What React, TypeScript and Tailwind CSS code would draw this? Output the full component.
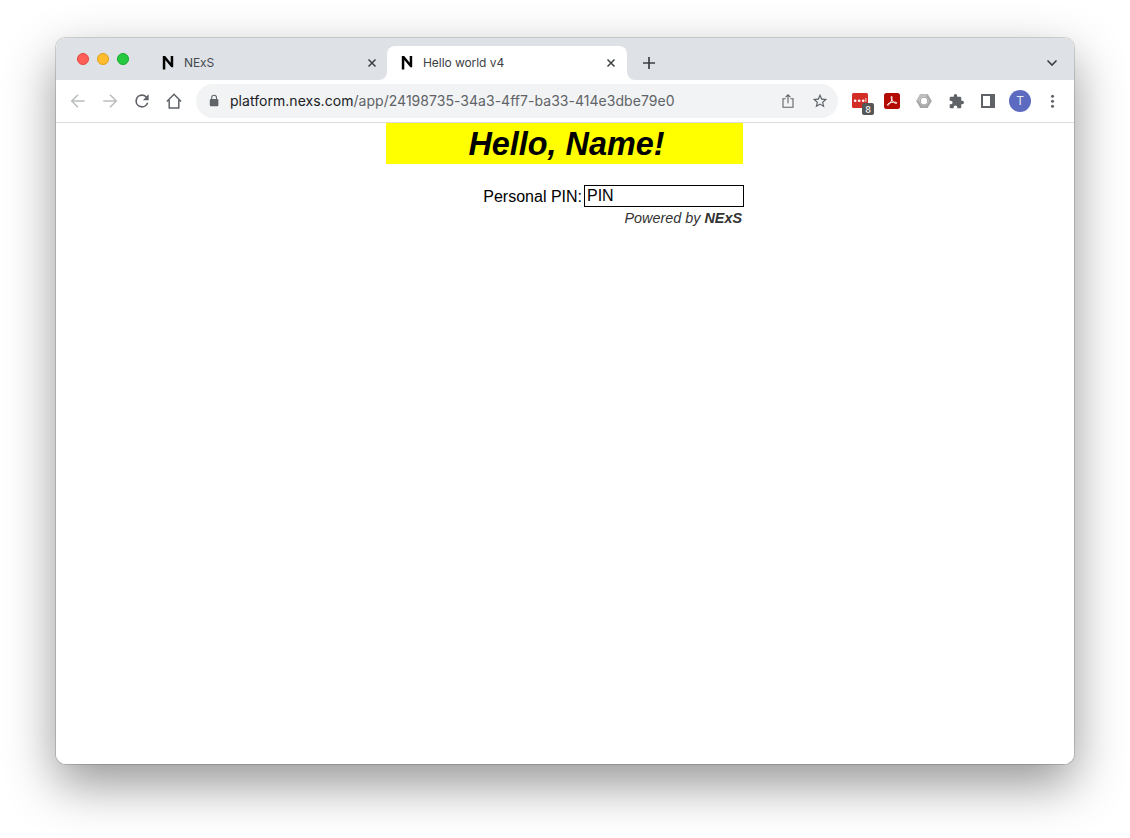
import type { ReactNode } from "react";

function NexsLogo() {
    return (
        <svg className="w-4 h-4 shrink-0" viewBox="0 0 16 16" fill="#000">
            <path d="M2.8 1h2.4l5.500 6.800V1h2.500v11.200h-1.900L5.300 5v9.600H2.800z" />
        </svg>
    );
}

function CloseIcon() {
    return (
        <svg className="w-4 h-4 shrink-0" viewBox="0 0 16 16" fill="none" stroke="#3c4043" strokeWidth={1.5}>
            <path d="M4.500 4.500l7 7M11.500 4.500l-7 7" />
        </svg>
    );
}

function Slot({ children }: { children: ReactNode }) {
    return <div className="relative w-8 h-8 shrink-0 flex items-center justify-center">{children}</div>;
}

function TabStrip() {
    return (
        <div className="h-[42px] bg-[#dee1e6] flex shrink-0">
            <div className="flex items-center gap-2 pl-[21px] w-[92px] shrink-0">
                <span className="w-3 h-3 rounded-full bg-[#ff5f57] border border-[#e2463f]" />
                <span className="w-3 h-3 rounded-full bg-[#febc2e] border border-[#e1a116]" />
                <span className="w-3 h-3 rounded-full bg-[#28c840] border border-[#12ac28]" />
            </div>
            <div className="mt-2 w-[239px] h-[34px] flex items-center pl-3 pr-[7px] text-[#45494d]">
                <NexsLogo />
                <span className="ml-2 flex-1 text-xs tracking-[-0.01em]">NExS</span>
                <CloseIcon />
            </div>
            <div className="relative mt-2 w-[240px] h-[34px] bg-white rounded-t-lg flex items-center pl-3 pr-2 text-[#3c4043]">
                <svg className="absolute -left-2 bottom-0 w-2 h-2" viewBox="0 0 8 8" fill="#fff">
                    <path d="M8 0v8H0a8 8 0 0 0 8-8z" />
                </svg>
                <svg className="absolute -right-2 bottom-0 w-2 h-2" viewBox="0 0 8 8" fill="#fff">
                    <path d="M0 0v8h8a8 8 0 0 1-8-8z" />
                </svg>
                <NexsLogo />
                <span className="ml-2 flex-1 text-xs tracking-[-0.005em]">Hello world v4</span>
                <CloseIcon />
            </div>
            <svg className="w-4 h-4 ml-[14px] mt-[17px]" viewBox="0 0 16 16" stroke="#3c4043" strokeWidth={1.7}>
                <path d="M8 2v12M2 8h12" />
            </svg>
            <svg className="w-4 h-4 ml-auto mr-[14px] mt-[17px]" viewBox="0 0 16 16" fill="none" stroke="#3c4043" strokeWidth={1.6}>
                <path d="M3.500 5.500L8 10l4.500-4.500" />
            </svg>
        </div>
    );
}

function Omnibox() {
    return (
        <div className="w-[642px] h-[34px] ml-1.5 rounded-full bg-[#f1f3f4] flex items-center pl-2.5 pr-0.5">
            <svg className="w-4 h-4 shrink-0" viewBox="0 0 16 16" fill="none">
                <rect x="3.8" y="6" width="8.6" height="7.2" rx="1" fill="#5f6368" />
                <path d="M5.7 6.3V4.6a2.4 2.4 0 0 1 4.8 0v1.7" stroke="#5f6368" strokeWidth={1.1} />
            </svg>
            <div className="ml-2 flex-1 whitespace-nowrap text-sm tracking-[0.035px] text-[#5f6368]">
                <span className="text-[#202124]">platform.nexs.com</span>/app/24198735-34a3-4ff7-ba33-414e3dbe79e0
            </div>
            <Slot>
                <svg className="w-4 h-4" viewBox="0 0 16 16" fill="none" stroke="#5f6368" strokeWidth={1.1}>
                    <path d="M5.6 5.800H3v8.400h10V5.800h-2.600M8 10.300V1.900M5.600 4.200L8 1.800l2.400 2.400" />
                </svg>
            </Slot>
            <Slot>
                <svg className="w-4 h-4" viewBox="1 1 22 22" fill="#5f6368">
                    <path d="M22 9.24l-7.19-.62L12 2 9.19 8.63 2 9.24l5.46 4.73L5.82 21 12 17.27 18.18 21l-1.63-7.03L22 9.24zM12 15.4l-3.76 2.27 1-4.28-3.32-2.88 4.38-.38L12 6.1l1.71 4.04 4.38.38-3.32 2.88 1 4.28L12 15.4z" />
                </svg>
            </Slot>
        </div>
    );
}

function Toolbar() {
    return (
        <div className="h-[43px] bg-white border-b border-[#dadce0] flex items-center pl-1.5 shrink-0">
            <Slot>
                <svg className="w-4 h-4" viewBox="0 0 16 16" fill="none" stroke="#babcbe" strokeWidth={1.5}>
                    <path d="M14.700 8H2M8 1.700L1.700 8 8 14.300" />
                </svg>
            </Slot>
            <Slot>
                <svg className="w-4 h-4" viewBox="0 0 16 16" fill="none" stroke="#babcbe" strokeWidth={1.5}>
                    <path d="M1.300 8H14M8 1.700L14.300 8 8 14.300" />
                </svg>
            </Slot>
            <Slot>
                <svg className="w-5 h-5" viewBox="0 0 24 24" fill="#5f6368">
                    <path d="M17.65 6.35A7.96 7.96 0 0 0 12 4a8 8 0 1 0 7.73 10h-2.08A6 6 0 1 1 12 6c1.66 0 3.14.69 4.22 1.78L13 11h7V4l-2.350 2.350z" />
                </svg>
            </Slot>
            <Slot>
                <svg className="w-4 h-4" viewBox="0 0 16 16" fill="none" stroke="#5f6368" strokeWidth={1.5}>
                    <path d="M.9 8.600L8 1.300l7.100 7.300M3.200 7v8h9.600V7" />
                </svg>
            </Slot>
            <Omnibox />
            <div className="flex items-center ml-1.5">
                <Slot>
                    <svg className="w-4 h-4" viewBox="0 0 16 16">
                        <rect y="0" width="16" height="15" rx="1.500" fill="#d32d27" />
                        <g fill="#fff">
                            <circle cx="3.200" cy="7.800" r="1.300" />
                            <circle cx="7.200" cy="7.800" r="1.300" />
                            <circle cx="11.200" cy="7.800" r="1.300" />
                            <rect x="13.500" y="5" width=".8" height="4" />
                        </g>
                    </svg>
                    <span className="absolute left-[18px] top-[18px] w-3 h-3 rounded-xs bg-[#565656] text-white text-[9px] leading-3.5 font-medium text-center">8</span>
                </Slot>
                <Slot>
                    <svg className="w-4 h-4" viewBox="0 0 16 16">
                        <rect width="16" height="16" rx="2.500" fill="#b30b00" />
                        <path d="M7.500 3.300c-1.100.5.200 3.300 1 4.600 1.300 1.900 3.900 3.200 4.400 2.200.4-1.300-4.300-1.100-6.300-.5-2 .6-3.700 1.700-3.200 2.500.8.900 3-2.100 3.900-4.100.8-1.900 1.200-4.700.2-4.700z" fill="none" stroke="#fff" strokeWidth={1} />
                    </svg>
                </Slot>
                <Slot>
                    <svg className="w-4 h-4" viewBox="0 0 16 16">
                        <path d="M4.300 1h7.400L15.800 8l-4.100 7H4.300L.2 8z" fill="#a6a6a6" />
                        <path d="M.2 8l4.100-7h7.400L8 8z" fill="#bdbdbd" />
                        <circle cx="8" cy="8" r="4.200" fill="#8f8f8f" stroke="#d4d4d4" strokeWidth={0.8} />
                        <circle cx="8" cy="8" r="3.200" fill="#fff" />
                    </svg>
                </Slot>
                <Slot>
                    <svg className="w-[15px] h-[15px]" viewBox="1 1 22 22" fill="#5f6368">
                        <path d="M20.500 11H19V7c0-1.100-.9-2-2-2h-4V3.500a2.500 2.500 0 0 0-5 0V5H4c-1.100 0-2 .9-2 2v3.800h1.500a2.700 2.700 0 0 1 0 5.400H2V20c0 1.100.9 2 2 2h3.800v-1.500a2.700 2.700 0 0 1 5.400 0V22H17c1.100 0 2-.9 2-2v-4h1.500a2.500 2.500 0 0 0 0-5z" />
                    </svg>
                </Slot>
                <Slot>
                    <svg className="w-4 h-4" viewBox="0 0 16 16" fill="#5f6368" fillRule="evenodd">
                        <path d="M1 1h14v14H1zM3 3v10h7V3z" />
                    </svg>
                </Slot>
                <Slot>
                    <span className="w-[22px] h-[22px] rounded-full bg-[#5c6bc0] text-[#e8eaf6] text-xs flex items-center justify-center">T</span>
                </Slot>
                <Slot>
                    <svg className="w-4 h-4" viewBox="0 0 16 16" fill="#5f6368">
                        <circle cx="8.500" cy="3.200" r="1.500" />
                        <circle cx="8.500" cy="8.200" r="1.500" />
                        <circle cx="8.500" cy="13.200" r="1.500" />
                    </svg>
                </Slot>
            </div>
        </div>
    );
}

export default function App() {
    return (
        <div className="w-[1130px] h-[838px] overflow-hidden bg-white pt-[38px] pl-[56px] font-['Inter',sans-serif]">
            <div className="w-[1018px] h-[726px] rounded-[10px] shadow-[0_0_0_1px_rgba(0,0,0,0.15),0_20px_50px_rgba(0,0,0,0.42)]">
                <div className="h-full rounded-[10px] overflow-hidden bg-white flex flex-col">
                    <TabStrip />
                    <Toolbar />

                    {/* Page content */}
                    <div className="w-[358px] ml-[330px] font-['Liberation_Sans',Arial,sans-serif] text-black">
                        <h1 className="w-[357px] h-[41px] bg-[#ffff00] text-center text-[32.4px] leading-[42px] font-bold italic pl-1">
                            Hello, Name!
                        </h1>
                        <div className="mt-[21px] flex justify-end">
                            <label htmlFor="pin" className="text-base leading-[23px] mr-0.5">Personal PIN:</label>
                            <input
                                id="pin"
                                defaultValue="PIN"
                                className="w-[160px] h-[22px] border border-black px-0.5 text-base leading-5 outline-none"
                            />
                        </div>
                        <p className="text-right pr-0.5 text-[14.4px] leading-5 italic text-[#333]">
                            Powered by <b>NExS</b>
                        </p>
                    </div>
                </div>
            </div>
        </div>
    );
}
